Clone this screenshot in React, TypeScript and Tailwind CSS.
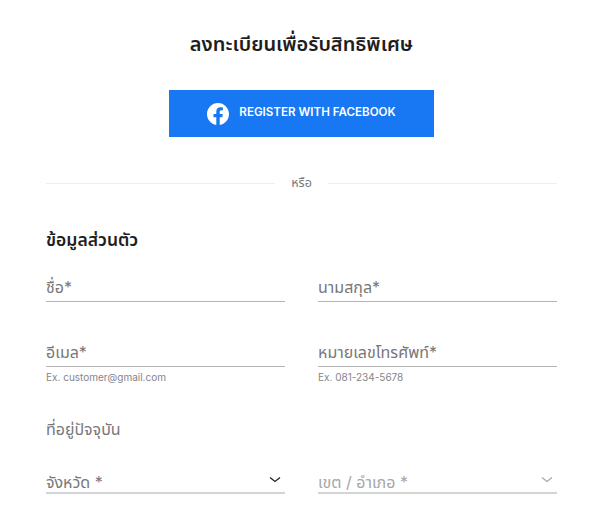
const font = "font-['Inter','Noto_Sans_Thai','Noto_Sans','DejaVu_Sans',sans-serif]";

function Field({ label, hint }: { label: string; hint?: string }) {
  return (
    <div>
      <div className={`flex h-[30px] items-center border-b border-[#b5b5b5] text-[16px] text-[#77777a] ${hint ? "" : "pt-[1px]"}`}>{label}</div>
      {hint && <div className="mt-[3px] h-[14px] text-[10px] leading-[14px] text-[#85858a]">{hint}</div>}
    </div>
  );
}

function SelectField({ label, disabled }: { label: string; disabled?: boolean }) {
  return (
    <div className={`flex h-[25px] items-center justify-between border-b-2 border-[#d4d4d4] pt-[3px] text-[16px] ${disabled ? "text-[#a6a6a9]" : "text-[#77777a]"}`}>
      <span>{label}</span>
      <svg width="12" height="8" viewBox="0 0 12 8" fill="none" stroke={disabled ? "#a8a8a8" : "#222"} strokeWidth="1.3" className="mb-[5px] mr-[4px]">
        <path d="M1 1.5l5 4 5-4" />
      </svg>
    </div>
  );
}

export default function App() {
  return (
    <div className={`h-[521px] w-[600px] overflow-hidden bg-white pl-[46px] pr-[43px] ${font}`}>
      <h1 className="pt-[29px] text-center text-[20px] font-semibold leading-[30px] text-[#1e1e1e]">ลงทะเบียนเพื่อรับสิทธิพิเศษ</h1>
      <div className="mt-[31px] flex justify-center">
        <button className="flex h-[47px] w-[265px] items-center justify-center gap-[10px] bg-[#1877f2] text-[11.6px] font-semibold text-white">
          <svg width="22" height="22" viewBox="0 0 24 24" fill="#fff">
            <path d="M24 12.07C24 5.4 18.63 0 12 0S0 5.4 0 12.07c0 6.03 4.39 11.02 10.13 11.93v-8.44H7.08v-3.49h3.05V9.41c0-3.02 1.79-4.69 4.53-4.69 1.31 0 2.69.24 2.69.24v2.97h-1.51c-1.49 0-1.96.93-1.96 1.89v2.25h3.33l-.53 3.49h-2.8V24C19.61 23.09 24 18.1 24 12.07z" />
          </svg>
          <span className="pb-[2px]">REGISTER WITH FACEBOOK</span>
        </button>
      </div>
      <div className="mt-[37px] flex h-[18px] items-center gap-[16px] text-[12.5px] text-[#77777a]">
        <div className="h-px flex-1 bg-[#eeeeee]" />
        <span className="text-center">หรือ</span>
        <div className="h-px flex-1 bg-[#eeeeee]" />
      </div>
      <h2 className="mt-[36px] text-[17.5px] font-semibold leading-[24px] text-[#1e1e1e]">ข้อมูลส่วนตัว</h2>
      <div className="mt-[20px] grid grid-cols-2 gap-x-[33px]">
        <Field label="ชื่อ*" />
        <Field label="นามสกุล*" />
      </div>
      <div className="mt-[35px] grid grid-cols-2 gap-x-[33px]">
        <Field label="อีเมล*" hint="Ex. customer@gmail.com" />
        <Field label="หมายเลขโทรศัพท์*" hint="Ex. 081-234-5678" />
      </div>
      <div className="mt-[33px] text-[16px] leading-[24px] text-[#77777a]">ที่อยู่ปัจจุบัน</div>
      <div className="mt-[28px] grid grid-cols-2 gap-x-[33px]">
        <SelectField label="จังหวัด *" />
        <SelectField label="เขต / อำเภอ *" disabled />
      </div>
    </div>
  );
}
